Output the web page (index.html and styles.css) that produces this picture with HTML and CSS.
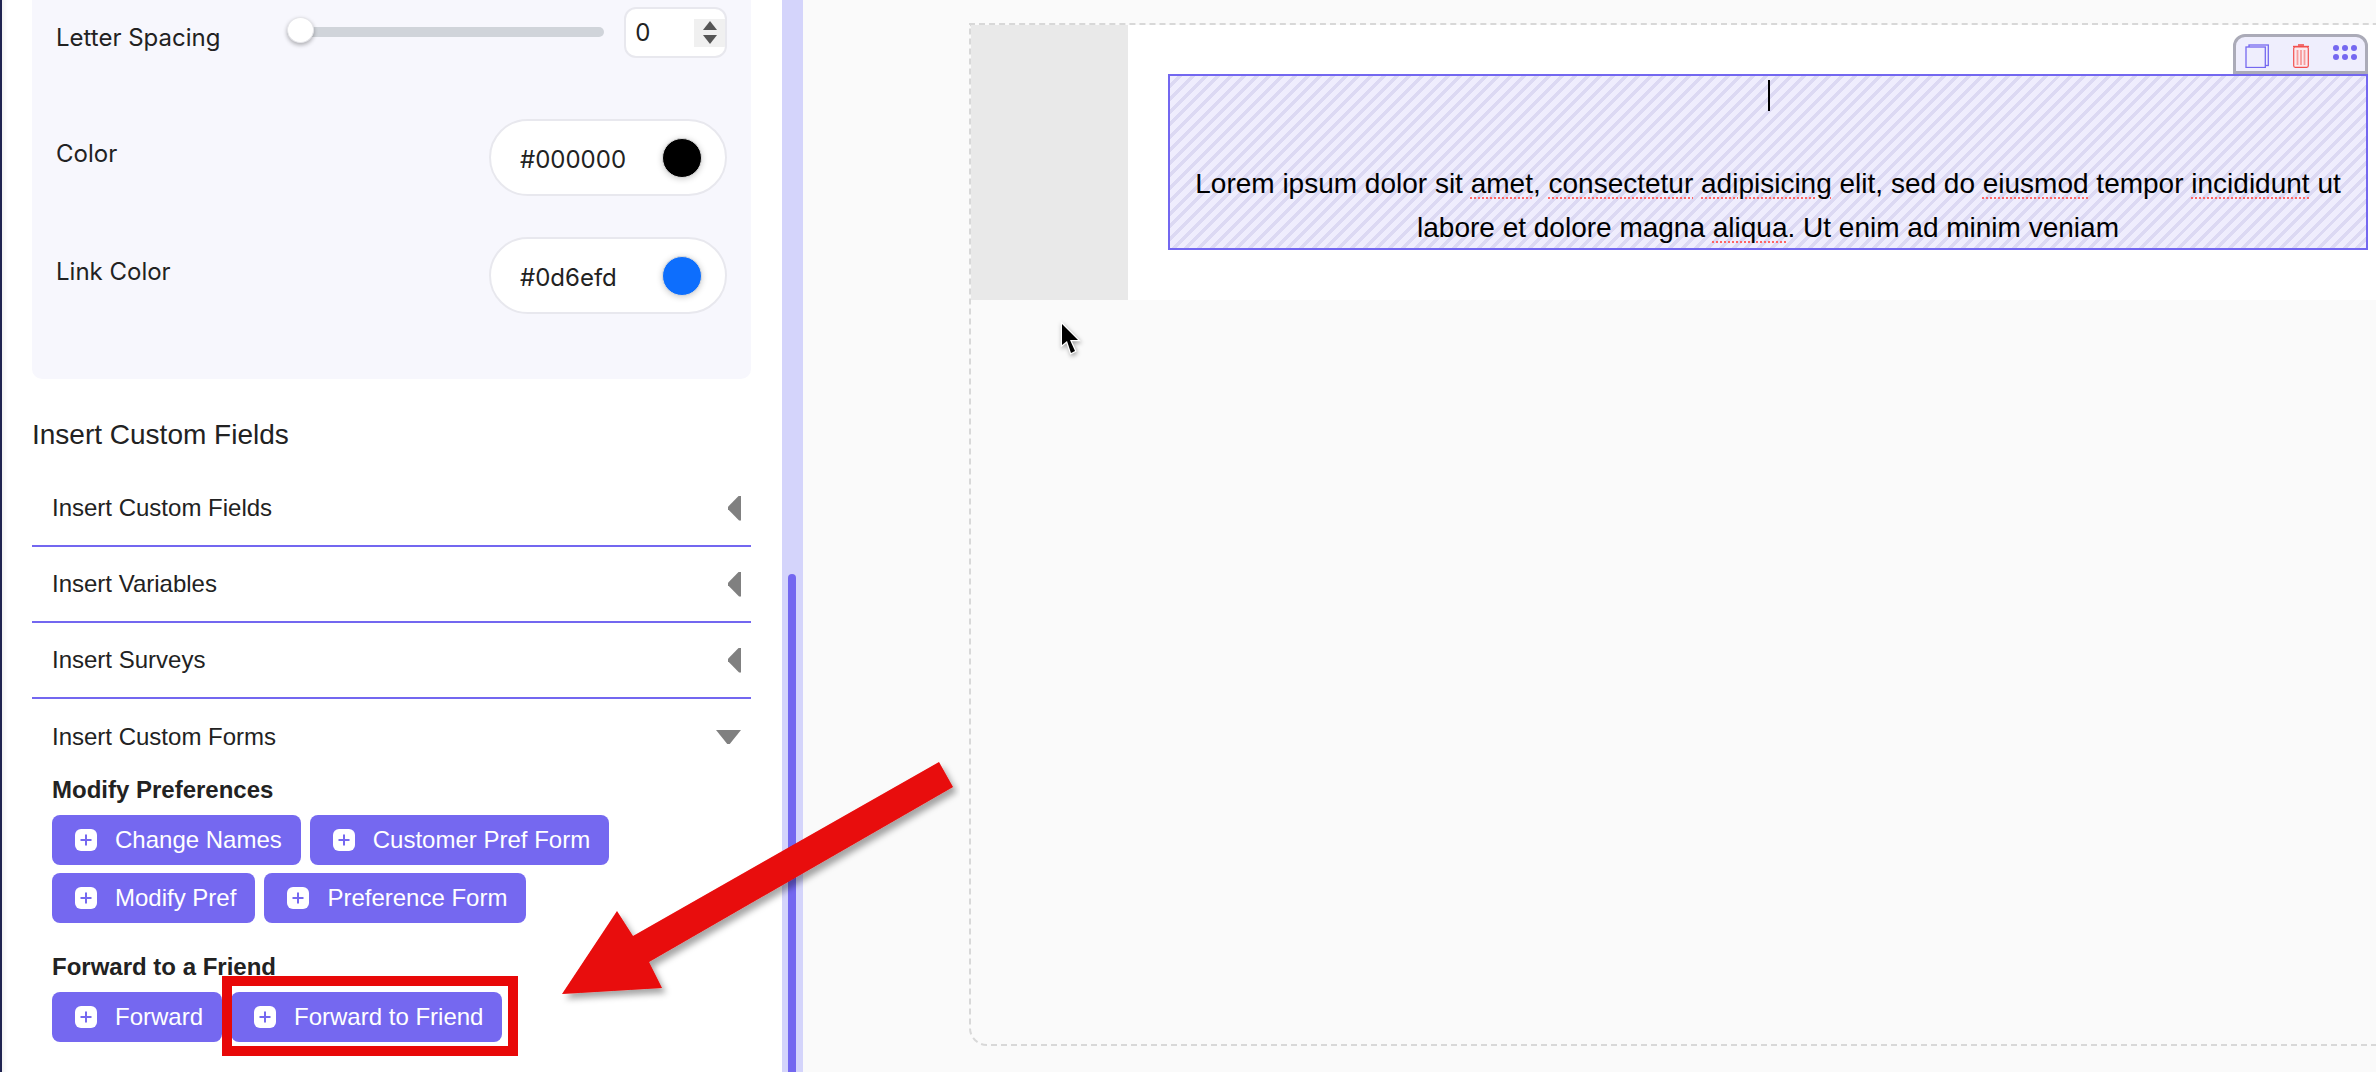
FILE: index.html
```html
<!DOCTYPE html>
<html lang="en">

<head>
  <meta charset="UTF-8">
  <meta name="viewport" content="width=device-width, initial-scale=1.0">
  <title>Email Editor</title>
  <link rel="stylesheet" href="styles.css">
</head>

<body>
  <div class="editor">
    <aside class="sidebar">
      <section class="settings">
        <div class="setting setting-spacing">
          <span class="setting-label">Letter Spacing</span>
          <div class="slider">
            <span class="slider-thumb"></span>
          </div>
          <div class="number-input">
            <span>0</span>
            <span class="spin">
              <i class="spin-up"></i>
              <i class="spin-down"></i>
            </span>
          </div>
        </div>
        <div class="setting setting-color">
          <span class="setting-label">Color</span>
          <div class="color-pill">
            <span>#000000</span>
            <i class="swatch swatch-black"></i>
          </div>
        </div>
        <div class="setting setting-color">
          <span class="setting-label">Link Color</span>
          <div class="color-pill">
            <span>#0d6efd</span>
            <i class="swatch swatch-blue"></i>
          </div>
        </div>
      </section>

      <h2 class="fields-title">Insert Custom Fields</h2>

      <div class="accordion-row">
        <span>Insert Custom Fields</span>
        <i class="caret-left"></i>
      </div>
      <div class="accordion-row">
        <span>Insert Variables</span>
        <i class="caret-left"></i>
      </div>
      <div class="accordion-row">
        <span>Insert Surveys</span>
        <i class="caret-left"></i>
      </div>
      <div class="accordion-row accordion-open">
        <span>Insert Custom Forms</span>
        <i class="caret-down"></i>
      </div>

      <div class="forms">
        <h3 class="forms-title">Modify Preferences</h3>
        <div class="btn-list">
          <a class="btn"><svg class="btn-plus" viewBox="0 0 22 22"><rect width="22" height="22" rx="6" fill="#fff"/><path d="M11 5.500v11M5.500 11h11" stroke="#7568f0" stroke-width="2"/></svg>Change Names</a>
          <a class="btn"><svg class="btn-plus" viewBox="0 0 22 22"><rect width="22" height="22" rx="6" fill="#fff"/><path d="M11 5.500v11M5.500 11h11" stroke="#7568f0" stroke-width="2"/></svg>Customer Pref Form</a>
          <a class="btn"><svg class="btn-plus" viewBox="0 0 22 22"><rect width="22" height="22" rx="6" fill="#fff"/><path d="M11 5.500v11M5.500 11h11" stroke="#7568f0" stroke-width="2"/></svg>Modify Pref</a>
          <a class="btn"><svg class="btn-plus" viewBox="0 0 22 22"><rect width="22" height="22" rx="6" fill="#fff"/><path d="M11 5.500v11M5.500 11h11" stroke="#7568f0" stroke-width="2"/></svg>Preference Form</a>
        </div>
        <h3 class="forms-title forms-title-second">Forward to a Friend</h3>
        <div class="btn-list">
          <a class="btn"><svg class="btn-plus" viewBox="0 0 22 22"><rect width="22" height="22" rx="6" fill="#fff"/><path d="M11 5.500v11M5.500 11h11" stroke="#7568f0" stroke-width="2"/></svg>Forward</a>
          <a class="btn"><svg class="btn-plus" viewBox="0 0 22 22"><rect width="22" height="22" rx="6" fill="#fff"/><path d="M11 5.500v11M5.500 11h11" stroke="#7568f0" stroke-width="2"/></svg>Forward to Friend</a>
        </div>
      </div>
    </aside>

    <div class="gutter">
      <span class="gutter-thumb"></span>
    </div>

    <main class="canvas">
      <div class="page">
        <div class="row">
          <div class="col-empty"></div>
          <div class="col-content">
            <div class="block">
              <div class="block-tools">
                <svg class="tool-copy" viewBox="0 0 24 24" fill="none" stroke="#7568f0" stroke-width="1.300">
                  <rect x="4" y="1" width="19.300" height="20.500"/>
                  <rect x="1" y="3" width="19.300" height="20.500" fill="#efeefd"/>
                </svg>
                <svg class="tool-trash" viewBox="0 0 16 24" fill="none" stroke="#f2504f" stroke-width="1.200">
                  <path d="M5 1h6" stroke-width="1.600"/>
                  <path d="M0 2.500h16" stroke-width="1.400"/>
                  <rect x="0.700" y="3" width="14.600" height="20.300" rx="1.500" fill="#fbe9ee"/>
                  <path d="M4.500 6v15M8 6v15M11.500 6v15" stroke-width="1.800" stroke="#f79c9c"/>
                </svg>
                <div class="tool-dots">
                  <i></i><i></i><i></i><i></i><i></i><i></i>
                </div>
              </div>
              <span class="text-caret"></span>
              <p class="block-text">Lorem ipsum dolor sit <u>amet</u>, <u>consectetur</u> <u>adipisicing</u> elit, sed do <u>eiusmod</u> tempor <u>incididunt</u> ut labore et dolore magna <u>aliqua</u>. Ut enim ad minim veniam</p>
            </div>
          </div>
        </div>
      </div>
      <svg class="cursor" viewBox="0 0 30 40">
        <path d="M4 3V24l5-4 4 12 4-2-5-11h8z" fill="#000" stroke="#fff" stroke-width="2.500" paint-order="stroke"/>
      </svg>
    </main>
  </div>

  <!-- annotation on top of the screenshot -->
  <div class="callout-box"></div>
  <svg class="callout-arrow" viewBox="0 0 420 260">
    <defs>
      <filter id="arrow-shadow" x="-10%" y="-10%" width="125%" height="125%">
        <feDropShadow dx="4" dy="5" stdDeviation="3" flood-color="#000" flood-opacity="0.35"/>
      </filter>
    </defs>
    <polygon points="399,12 413,37 109,212 122,238 22,244 77,161 93,186" fill="#e80808" filter="url(#arrow-shadow)"/>
  </svg>
</body>

</html>
```

FILE: styles.css
```css
html {
  box-sizing: border-box;
}

*,
*::before,
*::after {
  box-sizing: border-box;
}

body {
  margin: 0;
  height: 1072px;
  overflow: hidden;
  font-family: Inter, sans-serif;
  color: #222;
  background: #fff;
}

.editor {
  display: flex;
  height: 1072px;
  overflow: hidden;
}

/* left panel */
.sidebar {
  width: 782px;
  flex-shrink: 0;
  padding: 0 31px 0 33px;
  border-left: 2px solid #1f2350;
  background: #fff;
  box-shadow: inset 7px 0 7px -7px rgba(0, 0, 0, 0.12);
  overflow: hidden;
}

.settings {
  height: 379px;
  margin-left: -3px;
  padding: 7px 24px 0 24px;
  background: #f7f7fd;
  border-radius: 0 0 10px 10px;
}

.setting {
  display: flex;
  align-items: flex-start;
}

.setting-label {
  font-size: 24px;
  line-height: 30px;
  color: #222;
}

.setting-spacing {
  height: 112px;
}

.setting-spacing .setting-label {
  width: 231px;
  margin-top: 16px;
}

.setting-color {
  height: 118px;
  justify-content: space-between;
}

.setting-color .setting-label {
  margin-top: 20px;
}

.slider {
  position: relative;
  width: 318px;
  height: 10px;
  margin-top: 20px;
  background: #d0d4da;
  border-radius: 5px;
}

.slider-thumb {
  position: absolute;
  left: 0;
  top: -10px;
  width: 27px;
  height: 26px;
  border-radius: 50%;
  background: #fff;
  border: 1px solid #e6e6ea;
  box-shadow: 0 2px 4px rgba(0, 0, 0, 0.3);
}

.number-input {
  display: flex;
  align-items: center;
  justify-content: space-between;
  width: 103px;
  height: 51px;
  margin-left: 20px;
  padding-left: 9px;
  background: #fff;
  border: 2px solid #e8e8ee;
  border-radius: 12px;
  font-size: 24px;
  overflow: hidden;
}

.spin {
  display: flex;
  flex-direction: column;
  align-items: center;
  justify-content: center;
  gap: 5px;
  width: 31px;
  height: 28px;
  background: #f0f0f0;
}

.spin-up,
.spin-down {
  width: 0;
  height: 0;
  border-left: 7px solid transparent;
  border-right: 7px solid transparent;
}

.spin-up {
  border-bottom: 9px solid #555;
}

.spin-down {
  border-top: 9px solid #555;
}

.color-pill {
  display: flex;
  align-items: center;
  justify-content: space-between;
  width: 238px;
  height: 77px;
  padding: 0 23px 0 29px;
  background: #fff;
  border: 2px solid #e8e8ee;
  border-radius: 39px;
  font-size: 24px;
}

.color-pill span {
  margin-top: 4px;
}

.swatch {
  width: 40px;
  height: 40px;
  border-radius: 50%;
  border: 1px solid #ddd;
  box-shadow: 0 1px 6px rgba(0, 0, 0, 0.2);
}

.swatch-black {
  background: #000;
}

.swatch-blue {
  background: #0d6efd;
}

/* custom fields list */
.fields-title {
  margin: 38px 0 18px -3px;
  height: 36px;
  font-family: "Liberation Sans", sans-serif;
  font-weight: 400;
  font-size: 28px;
  line-height: 36px;
  color: #222;
}

.accordion-row {
  display: flex;
  align-items: center;
  justify-content: space-between;
  height: 76px;
  margin-left: -3px;
  padding: 0 10px 0 20px;
  border-bottom: 2px solid #7367f0;
  font-family: "Liberation Sans", sans-serif;
  font-size: 24px;
  color: #222;
}

.accordion-open {
  border-bottom: 0;
}

.caret-left {
  width: 13px;
  height: 25px;
  background: #808080;
  clip-path: polygon(100% 0, 100% 100%, 85% 100%, 0 55%, 0 45%, 85% 0);
}

.caret-down {
  width: 25px;
  height: 14px;
  background: #808080;
  clip-path: polygon(0 0, 100% 0, 55% 100%, 45% 100%);
}

/* form buttons */
.forms {
  margin-left: -3px;
  padding-left: 20px;
  font-family: "Liberation Sans", sans-serif;
}

.forms-title {
  margin: 0;
  font-size: 24px;
  line-height: 30px;
  font-weight: 700;
  color: #222;
}

.forms-title-second {
  margin-top: 29px;
  margin-bottom: 1px;
}

.btn-list {
  display: flex;
  flex-wrap: wrap;
  gap: 8px 9px;
  margin-top: 10px;
  width: 600px;
}

.btn {
  display: inline-flex;
  align-items: center;
  height: 50px;
  padding: 0 19px 0 23px;
  border-radius: 8px;
  background: #7568f0;
  color: #fff;
  font-size: 24px;
}

.btn-plus {
  width: 22px;
  height: 22px;
  margin-right: 18px;
}

/* scrollbar between panel and canvas */
.gutter {
  position: relative;
  width: 21px;
  flex-shrink: 0;
  background: #d4d4fb;
}

.gutter-thumb {
  position: absolute;
  left: 6px;
  top: 574px;
  width: 8px;
  height: 498px;
  border-radius: 4px 4px 0 0;
  background: #7367f0;
}

/* email canvas */
.canvas {
  position: relative;
  flex: 1;
  min-width: 0;
  padding: 23px 0 0 166px;
  background: #fafafa;
  overflow: hidden;
}

.page {
  width: 1500px;
  height: 1023px;
  border: 2px dashed #d8d8d8;
  border-radius: 0 0 0 18px;
}

.row {
  display: flex;
  height: 275px;
}

.col-empty {
  width: 157px;
  background: #e9e9e9;
}

.col-content {
  width: 1248px;
  padding-top: 49px;
  padding-left: 40px;
  background: #fff;
}

.block {
  position: relative;
  width: 1200px;
  height: 176px;
  border: 2px solid #7367f0;
  background: repeating-linear-gradient(135deg, #efedfd 0, #efedfd 5.500px, #dcd9f3 5.500px, #dcd9f3 9px);
}

.block-tools {
  position: absolute;
  right: -2px;
  top: -42px;
  display: flex;
  align-items: center;
  width: 135px;
  height: 40px;
  padding: 3px 0 0 9px;
  background: #efeefd;
  border: 3px solid #ababb8;
  border-radius: 12px 12px 0 0;
}

.tool-copy {
  width: 24px;
  height: 24px;
}

.tool-trash {
  width: 16px;
  height: 24px;
  margin-left: 24px;
}

.tool-dots {
  display: grid;
  grid-template-columns: repeat(3, 6px);
  gap: 3px;
  margin-left: 24px;
  margin-top: -6px;
}

.tool-dots i {
  width: 6px;
  height: 6px;
  border-radius: 50%;
  background: #7568f0;
}

.text-caret {
  position: absolute;
  left: 598px;
  top: 4px;
  width: 2px;
  height: 31px;
  background: #000;
}

.block-text {
  margin: 0;
  padding: 86px 20px 0;
  font-family: "Liberation Sans", sans-serif;
  font-size: 28px;
  line-height: 44px;
  text-align: center;
  color: #000;
}

.block-text u {
  text-decoration: underline dotted #f66 2px;
  text-underline-offset: 4px;
}

.cursor {
  position: absolute;
  left: 255px;
  top: 321px;
  width: 30px;
  height: 40px;
  filter: drop-shadow(1px 2px 2px rgba(0, 0, 0, 0.35));
}

/* red annotation */
.callout-box {
  position: absolute;
  left: 222px;
  top: 976px;
  width: 296px;
  height: 80px;
  border: 10px solid #e80808;
}

.callout-arrow {
  position: absolute;
  left: 540px;
  top: 750px;
  width: 420px;
  height: 260px;
}
```
